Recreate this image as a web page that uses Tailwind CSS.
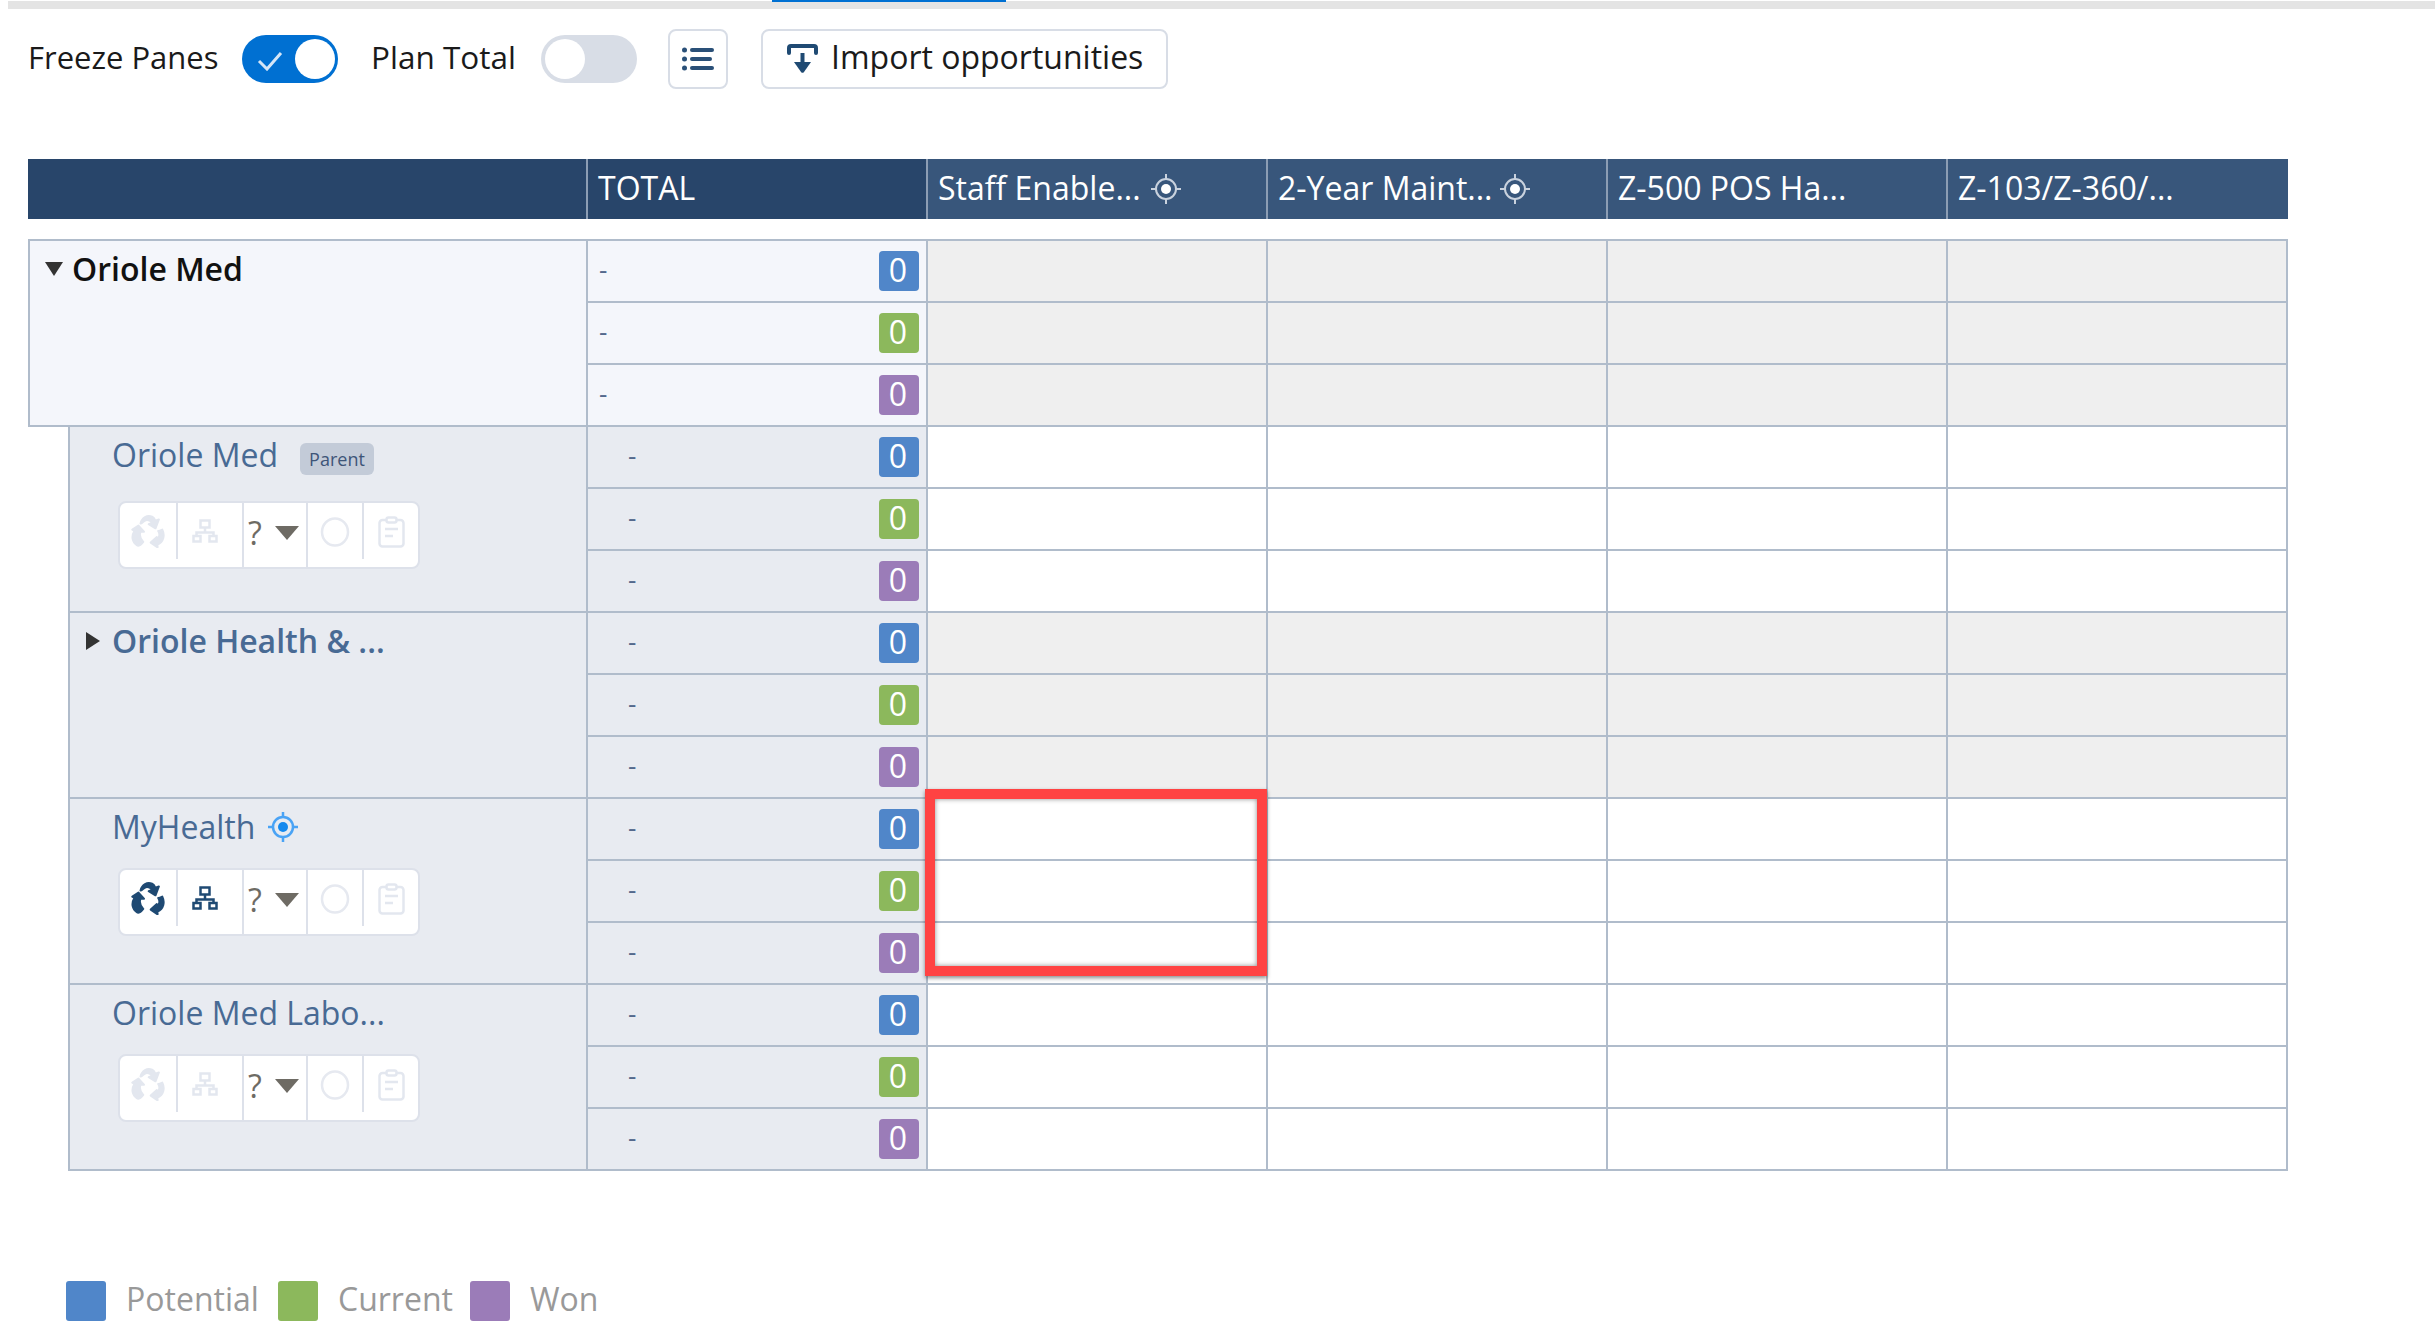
<!DOCTYPE html>
<html lang="en">
<head>
<meta charset="UTF-8">
<title>Account Plan Grid</title>
<script src="https://cdn.jsdelivr.net/npm/@tailwindcss/browser@4"></script>
</head>
<body class="bg-white">
<div class="relative w-[2435px] h-[1342px] overflow-hidden font-['Open_Sans',sans-serif] text-[32px] text-[#16325c]">
  <!-- top tabs strip -->
  <div class="relative ml-[8px] mt-[1px] h-[8px] bg-[#e4e4e4]"></div>
  <div class="absolute left-[772px] top-0 w-[234px] h-[2px] bg-[#0070d2]"></div>

  <!-- toolbar -->
  <div class="flex items-center h-[60px] mt-[20px] ml-[28px]">
    <span class="text-[#1a1a1a] text-[31px] w-[214px] pb-[4px]">Freeze Panes</span>
    <div class="relative w-[96px] h-[48px] rounded-full bg-[#0070d2]">
      <svg class="absolute left-[15px] top-[16px]" width="26" height="20" viewBox="0 0 26 20" fill="none"><path d="M2 10l8 8L24 2" stroke="#d5e6f7" stroke-width="3"/></svg>
      <div class="absolute right-[3px] top-[4px] w-[40px] h-[40px] rounded-full bg-white"></div>
    </div>
    <span class="text-[#1a1a1a] text-[31.500px] ml-[33px] w-[170px] pb-[4px]">Plan Total</span>
    <div class="relative w-[96px] h-[48px] rounded-full bg-[#d8dde6]">
      <div class="absolute left-[4px] top-[4px] w-[40px] h-[40px] rounded-full bg-white"></div>
    </div>
    <div class="flex items-center justify-center ml-[31px] w-[60px] h-[60px] rounded-[8px] border-2 border-[#d8dde6] bg-white">
      <svg width="32" height="24" viewBox="0 0 32 24" fill="#2a5078"><circle cx="2.5" cy="3" r="2.5"/><rect x="8" y="1" width="24" height="4" rx="2"/><circle cx="2.5" cy="12" r="2.5"/><rect x="8" y="10" width="22" height="4" rx="2"/><circle cx="2.5" cy="21" r="2.5"/><rect x="8" y="19" width="24" height="4" rx="2"/></svg>
    </div>
    <div class="flex items-center ml-[33px] w-[407px] h-[60px] rounded-[8px] border-2 border-[#d8dde6] bg-white pl-[24px] text-[#1a1a1a]">
      <svg class="mr-[13px]" width="31" height="30" viewBox="0 0 31 30" fill="none"><path d="M2 9V4a2 2 0 0 1 2-2h23a2 2 0 0 1 2 2v5" stroke="#1f4a73" stroke-width="4" stroke-linecap="round"/><path d="M15.500 9v12" stroke="#1f4a73" stroke-width="4"/><path d="M7 18h17l-7 10a2 2 0 0 1-3 0z" fill="#1f4a73"/></svg>
      <span class="pb-[4px]">Import opportunities</span>
    </div>
  </div>

  <!-- column headers -->
  <div class="flex ml-[28px] mt-[70px] w-[2260px] h-[60px] text-white">
    <div class="w-[560px] bg-[#28456a] border-r-2 border-[#8c9db4]"></div>
    <div class="flex items-center w-[340px] bg-[#28456a] border-r-2 border-[#8c9db4] pl-[10px] pb-[3px]">TOTAL</div>
    <div class="flex items-center w-[340px] bg-[#38567b] border-r-2 border-[#8c9db4] pl-[10px]"><span class="pb-[3px]">Staff Enable...</span>
      <svg class="ml-[9px]" width="32" height="32" viewBox="0 0 32 32" fill="none" stroke="#c9d2de" stroke-width="2"><circle cx="16" cy="16" r="10"/><circle cx="16" cy="16" r="5" fill="#fff" stroke="none"/><path d="M16 1v6M16 25v6M1 16h6M25 16h6"/></svg>
    </div>
    <div class="flex items-center w-[340px] bg-[#38567b] border-r-2 border-[#8c9db4] pl-[10px]"><span class="pb-[3px]">2-Year Maint...</span>
      <svg class="ml-[6px]" width="32" height="32" viewBox="0 0 32 32" fill="none" stroke="#c9d2de" stroke-width="2"><circle cx="16" cy="16" r="10"/><circle cx="16" cy="16" r="5" fill="#fff" stroke="none"/><path d="M16 1v6M16 25v6M1 16h6M25 16h6"/></svg>
    </div>
    <div class="flex items-center w-[340px] bg-[#38567b] border-r-2 border-[#8c9db4] pl-[10px] pb-[3px]">Z-500 POS Ha...</div>
    <div class="flex items-center w-[340px] bg-[#38567b] pl-[10px] pb-[3px]">Z-103/Z-360/...</div>
  </div>

  <!-- grid body, filled in by the script below -->
  <div id="grid" class="mt-[20px] ml-[28px] w-[2260px]"></div>

  <!-- highlighted cell -->
  <div class="absolute left-[925px] top-[789px] w-[342px] h-[187px] border-[10px] border-[#ff4343] shadow-[0_2px_4px_rgba(0,0,0,0.45),inset_0_0_5px_rgba(0,0,0,0.45)]"></div>

  <!-- legend -->
  <div class="absolute left-[66px] top-[1281px] flex items-center h-[40px] text-[#999999]">
    <div class="w-[40px] h-[40px] rounded-[3px] bg-[#5086c9]"></div>
    <span class="ml-[20px] w-[152px] pb-[4px]">Potential</span>
    <div class="w-[40px] h-[40px] rounded-[3px] bg-[#8cb85c]"></div>
    <span class="ml-[20px] w-[132px] pb-[4px]">Current</span>
    <div class="w-[40px] h-[40px] rounded-[3px] bg-[#9b7cb8]"></div>
    <span class="ml-[20px] pb-[4px]">Won</span>
  </div>
</div>

<script>
  const recycle = `<svg width="34" height="34" viewBox="0 0 100 100" fill="currentColor" stroke="currentColor" stroke-width="6" stroke-linejoin="round"><path d="M28 28C32 10 48 2 62 8c6 3 8 8 10 12l10-4-10 26-20-12 10-4c-4-8-16-10-22-6-6 4-8 8-12 8z"/><path d="M22 34l16 18H28c-4 10 0 22 8 30-6 8-14 14-18 10C4 84 0 66 10 50l-6-4z"/><path d="M92 46c8 16 4 36-14 44v8L58 84l18-16v8c8-6 10-18 4-26 4 0 8-2 12-4z"/></svg>`;
  const hierarchy = `<svg width="26" height="24" viewBox="0 0 26 24" fill="none" stroke="currentColor" stroke-width="2.500"><rect x="8.500" y="1.500" width="9" height="7"/><path d="M13 8.500v5M4.500 17v-3.500h17V17"/><rect x="1.500" y="17" width="7" height="5.500"/><rect x="17.500" y="17" width="7" height="5.500"/></svg>`;
  const circle = `<svg width="30" height="30" viewBox="0 0 30 30" fill="none" stroke="#e6e9f0" stroke-width="2.500"><ellipse cx="15" cy="15" rx="13" ry="13.500"/></svg>`;
  const clipboard = `<svg width="27" height="32" viewBox="0 0 27 32" fill="none" stroke="#e3e7ef" stroke-width="2.500"><rect x="1.500" y="4" width="24" height="26.500" rx="3"/><rect x="8.500" y="1.500" width="10" height="5" rx="2" fill="#fff"/><path d="M7 13h13M7 20h8"/></svg>`;
  const target = `<svg class="ml-[12px]" width="32" height="32" viewBox="0 0 32 32" fill="none" stroke="#4aa3f5" stroke-width="2.500"><circle cx="16" cy="16" r="10"/><circle cx="16" cy="16" r="5" fill="#1589ee" stroke="none"/><path d="M16 1v6M16 25v6M1 16h6M25 16h6"/></svg>`;

  function actions(active, badge) {
    const tone = active ? 'text-[#1f4a73]' : 'text-[#e3e7ef]';
    return `<div class="flex items-stretch ${badge ? 'mt-[26px]' : 'mt-[21px]'} ml-[48px] w-[302px] h-[68px] rounded-[8px] border-2 border-[#dde1ea] bg-white">
      <div class="flex justify-center pt-[11px] w-[58px] h-[56px] border-r-2 border-[#dde1ea] ${tone}">${recycle}</div>
      <div class="flex justify-center pt-[16px] pr-[10px] w-[64px] h-[56px] ${tone}">${hierarchy}</div>
      <div class="flex items-start w-[66px] border-l-2 border-r-2 border-[#dde1ea] h-[64px] pl-[4px] pt-[8px] text-[#6e6b64] leading-[44px]">?
        <span class="ml-[13px] mt-[15px] w-0 h-0 border-x-[12px] border-x-transparent border-t-[14px] border-t-[#6e6b64]"></span></div>
      <div class="flex justify-center pt-[14px] w-[56px] h-[56px] border-r-2 border-[#dde1ea]">${circle}</div>
      <div class="flex justify-center pt-[13px] flex-1">${clipboard}</div>
    </div>`;
  }

  const groups = [
    { root: true, name: 'Oriole Med', greyed: true },
    { name: 'Oriole Med', badge: true, tools: 'off' },
    { name: 'Oriole Health & ...', bold: true, closed: true, greyed: true },
    { name: 'MyHealth', target: true, tools: 'on' },
    { name: 'Oriole Med Labo...', tools: 'off' },
  ];
  const pills = ['bg-[#5086c9]', 'bg-[#8cb85c]', 'bg-[#9b7cb8]'];

  document.getElementById('grid').innerHTML = groups.map(g => {
    const left = g.root
      ? 'w-[560px] bg-[#f4f6fb] border-l-2'
      : 'ml-[40px] w-[520px] bg-[#e8ebf1] border-l-2';
    const rows = pills.map(pill => `
      <div class="flex h-[62px]">
        <div class="flex items-center justify-between w-[340px] border-b-2 border-r-2 border-[#b0bccb] ${g.root ? 'bg-[#f4f6fb] pl-[11px]' : 'bg-[#e8ebf1] pl-[40px]'} pr-[7px] text-[#54698d]">
          <span class="text-[26px] pb-[4px]">-</span>
          <span class="flex items-center justify-center w-[40px] h-[40px] rounded-[4px] text-white pb-[3px] pr-[2px] ${pill}">0</span>
        </div>
        ${[0, 1, 2, 3].map(() => `<div class="w-[340px] border-b-2 border-r-2 border-[#b0bccb] ${g.greyed ? 'bg-[#efefef]' : 'bg-white'}"></div>`).join('')}
      </div>`).join('');
    let title;
    if (g.root) {
      title = `<span class="w-0 h-0 mr-[9px] border-x-[9px] border-x-transparent border-t-[14px] border-t-[#333333]"></span><span class="font-semibold text-[#111111]">${g.name}</span>`;
    } else if (g.closed) {
      title = `<span class="absolute left-[-26px] w-0 h-0 border-y-[9px] border-y-transparent border-l-[14px] border-l-[#333333]"></span><span class="font-semibold text-[#486a94]">${g.name}</span>`;
    } else {
      title = `<span class="text-[#486a94]">${g.name}</span>`;
    }
    return `<div class="flex border-[#b0bccb] ${g.root ? 'border-t-2' : ''}">
      <div class="${left} border-b-2 border-r-2 border-[#b0bccb]">
        <div class="relative flex items-center h-[40px] mt-[8px] ${g.root ? 'ml-[15px]' : 'ml-[42px]'}">
          ${title}
          ${g.badge ? '<span class="flex items-center justify-center ml-[22px] mt-[8px] w-[74px] h-[32px] rounded-[6px] bg-[#c3cbd8] text-[18px] text-[#3e5578]">Parent</span>' : ''}
          ${g.target ? target : ''}
        </div>
        ${g.tools ? actions(g.tools === 'on', g.badge) : ''}
      </div>
      <div>${rows}</div>
    </div>`;
  }).join('');
</script>
</body>
</html>
